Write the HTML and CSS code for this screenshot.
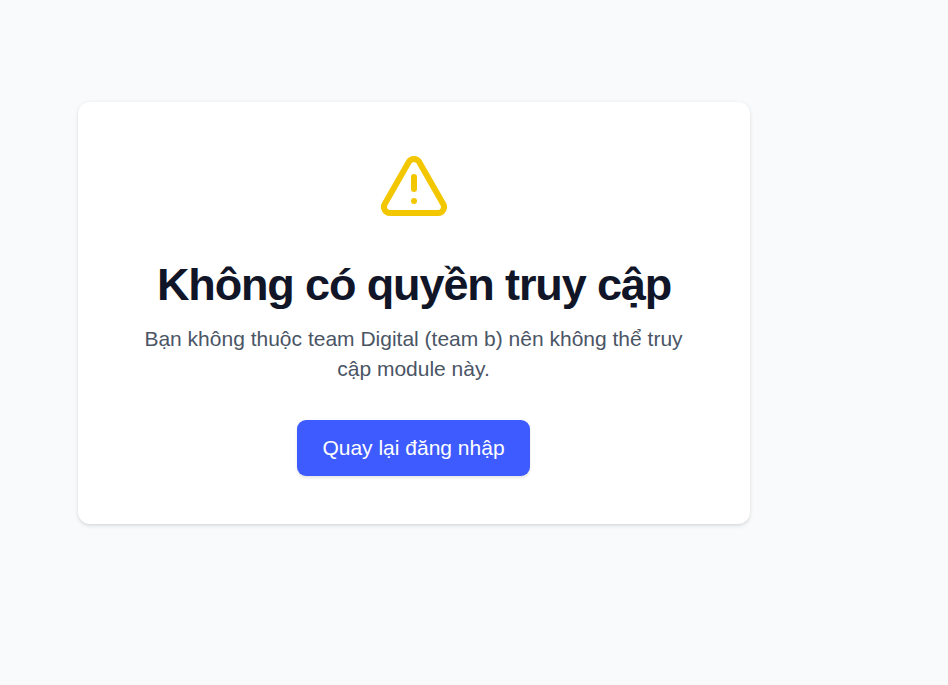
FILE: index.html
```html
<!DOCTYPE html>
<html lang="vi">
<head>
<meta charset="utf-8">
<title>Không có quyền truy cập</title>
<link rel="stylesheet" href="styles.css">
</head>
<body>
<main class="page">
  <section class="card">
    <svg class="icon" viewBox="0 0 24 24" fill="none" stroke="currentColor" stroke-width="2" stroke-linecap="round" stroke-linejoin="round" aria-hidden="true">
      <path d="m21.73 18-8-14a2 2 0 0 0-3.48 0l-8 14A2 2 0 0 0 4 21h16a2 2 0 0 0 1.73-3"/>
      <path d="M12 9v4"/>
      <path d="M12 17h.01"/>
    </svg>
    <h1 class="title">Không có quyền truy cập</h1>
    <p class="message">Bạn không thuộc team Digital (team b) nên không thể truy cập module này.</p>
    <button class="button" type="button">Quay lại đăng nhập</button>
  </section>
</main>
</body>
</html>
```

FILE: styles.css
```css
* { box-sizing: border-box; margin: 0; }
body {
  background: #f9fafb;
  font-family: "Liberation Sans", Arial, sans-serif;
}
.page {
  min-height: 100vh;
  padding: 102px 0 0 78px;
  background: #f9fafb;
}
.card {
  display: flex;
  flex-direction: column;
  align-items: center;
  width: 672px;
  height: 422px;
  padding: 48px;
  border-radius: 12px;
  background: #fff;
  box-shadow: 0 1.5px 4.5px rgba(0, 0, 0, .1), 0 1.5px 3px -1.5px rgba(0, 0, 0, .1);
  text-align: center;
}
.icon { width: 72px; height: 72px; flex: none; color: #f3c700; }
.title {
  margin-top: 36px;
  color: #111528;
  font-size: 45px;
  line-height: 54px;
  font-weight: 700;
  letter-spacing: -1.125px;
  white-space: nowrap;
}
.message {
  width: 576px;
  margin-top: 12px;
  margin-right: 1px;
  color: #4a5565;
  font-size: 21px;
  line-height: 30px;
}
.button {
  width: 233px;
  height: 56px;
  margin-top: 36px;
  margin-right: 1px;
  border: 0;
  border-radius: 9px;
  background: #3e5bff;
  box-shadow: 0 1.5px 3px rgba(0, 0, 0, .1);
  color: #fff;
  font: 21px/30px "Liberation Sans", Arial, sans-serif;
  white-space: nowrap;
}
```
